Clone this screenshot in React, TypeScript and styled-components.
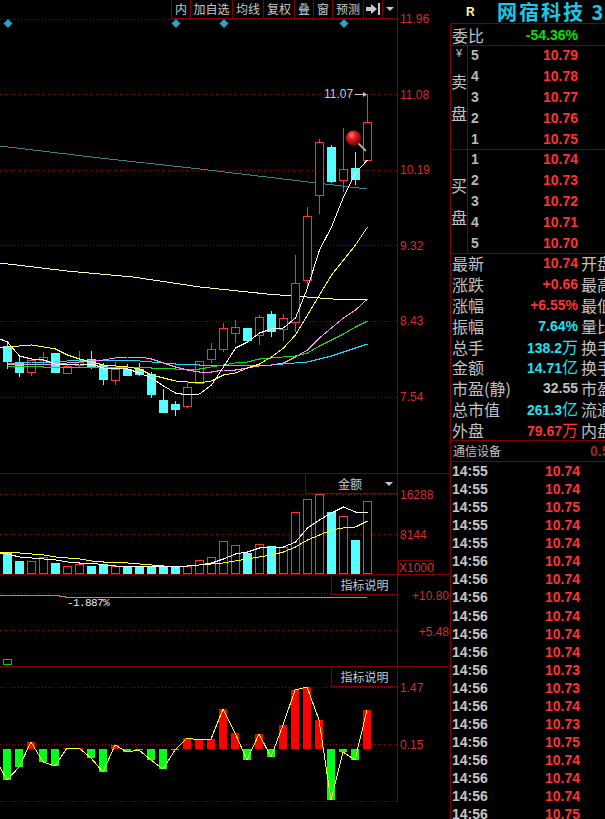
import React, { FC } from "react";
import styled, { createGlobalStyle } from "styled-components";

const RED = "#ff3333";
const CYAN = "#54ffff";
const GRID = "#a00000";
const LINE = "#800000";
const CJK = `"Noto Sans CJK SC", "Liberation Sans", sans-serif`;
const NUM = `"Liberation Sans", "Noto Sans CJK SC", sans-serif`;

const GlobalStyle = createGlobalStyle`
  html, body {
    margin: 0;
    padding: 0;
    background: #000;
    overflow: hidden;
  }
`;

const Screen = styled.div`
  width: 605px;
  height: 819px;
  display: flex;
  background: #000;
  overflow: hidden;
`;

const ChartColumn = styled.div`
  width: 450px;
  flex: none;
  display: flex;
  flex-direction: column;
`;

const Pane = styled.div<{ $height: number; $noBorder?: boolean }>`
  position: relative;
  height: ${(p) => p.$height}px;
  flex: none;
  display: flex;
  box-sizing: border-box;
  border-bottom: ${(p) => (p.$noBorder ? "none" : `1px solid ${LINE}`)};
`;

const Plot = styled.div`
  width: 397px;
  flex: none;
  border-right: 1px solid ${LINE};
  box-sizing: content-box;
  svg {
    display: block;
  }
`;

const Axis = styled.div<{ $top: number; $step: number; $align?: string }>`
  flex: 1;
  display: flex;
  flex-direction: column;
  align-items: ${(p) => p.$align || "flex-start"};
  padding-top: ${(p) => p.$top}px;
  padding-left: 2px;
  padding-right: 1px;
  span {
    height: ${(p) => p.$step}px;
    flex: none;
    font: 12px/16px ${NUM};
    color: #d92b2b;
  }
`;

const Toolbar = styled.div`
  position: absolute;
  top: 0;
  left: 171px;
  height: 18px;
  display: flex;
  background: #000;
  border-bottom: 1px solid ${LINE};
`;

const ToolButton = styled.div<{ $width: number }>`
  width: ${(p) => p.$width}px;
  box-sizing: border-box;
  border-left: 1px solid ${LINE};
  display: flex;
  align-items: center;
  justify-content: center;
  font: 12px/18px ${CJK};
  color: #c8c8c8;
  white-space: nowrap;
`;

const PaneTab = styled.div<{ $left: number; $height: number }>`
  position: absolute;
  top: 0;
  left: ${(p) => p.$left}px;
  width: ${(p) => 397 - p.$left}px;
  height: ${(p) => p.$height}px;
  box-sizing: border-box;
  border-left: 1px solid ${LINE};
  border-bottom: 1px solid ${LINE};
  background: #000;
  display: flex;
  align-items: center;
  justify-content: center;
  font: 12px/18px ${CJK};
  color: #c8c8c8;
`;

const AmountTab = styled(PaneTab)`
  padding-right: 21px;
  padding-left: 18px;
`;

const TabCaret = styled.i`
  position: absolute;
  right: 4px;
  top: 8px;
  width: 0;
  height: 0;
  border-left: 4px solid transparent;
  border-right: 4px solid transparent;
  border-top: 4px solid #c8c8c8;
`;

const UnitBox = styled.div`
  position: absolute;
  left: 398px;
  bottom: 0;
  width: 36px;
  height: 14px;
  box-sizing: border-box;
  border: 1px solid ${LINE};
  border-bottom: none;
  font: 12px/14px ${NUM};
  color: #d92b2b;
  text-align: center;
`;

const DriftLabel = styled.div`
  position: absolute;
  left: 67px;
  top: 21px;
  font: 11px/14px "Liberation Mono", monospace;
  letter-spacing: -0.6px;
  color: #e8e8e8;
`;

const GreenMark = styled.div`
  position: absolute;
  left: 3px;
  bottom: 1px;
  width: 7px;
  height: 4px;
  border: 1px solid #00d000;
`;

const HighLabel = styled.div`
  position: absolute;
  left: 324px;
  top: 87px;
  font: 12px/15px ${NUM};
  color: #b8cfe4;
`;

const Side = styled.div`
  flex: 1;
  min-width: 0;
  border-left: 1px solid ${LINE};
  margin-top: 23px;
  display: flex;
  flex-direction: column;
  position: relative;
`;

const Header = styled.div`
  position: absolute;
  top: -23px;
  left: -1px;
  width: 155px;
  height: 23px;
  display: flex;
  align-items: center;
  overflow: hidden;
  white-space: nowrap;
`;

const Market = styled.span`
  flex: none;
  margin-left: 16px;
  width: 31px;
  font: bold 12px/22px ${NUM};
  color: #ffff8c;
`;

const Title = styled.span`
  flex: none;
  font: bold 20px/22px ${CJK};
  letter-spacing: 2px;
  color: #18c8e8;
`;

const Row = styled.div<{ $height?: number }>`
  height: ${(p) => p.$height || 20.8}px;
  flex: none;
  display: flex;
  align-items: center;
  position: relative;
  white-space: nowrap;
  overflow: hidden;
`;

const RowLabel = styled.span`
  width: 71px;
  padding-left: 1px;
  box-sizing: border-box;
  flex: none;
  font: 16px/20px ${CJK};
  color: #c0c0c0;
`;

const StatValue = styled.span<{ $color: string }>`
  width: 56px;
  flex: none;
  text-align: right;
  font: bold 14px/20px ${NUM};
  color: ${(p) => p.$color};
`;

const StatUnit = styled.span`
  font: 16px/20px ${CJK};
`;

const StatExtra = styled.span`
  margin-left: 3px;
  font: 16px/20px ${CJK};
  color: #c0c0c0;
`;

const RatioRow = styled(Row)`
  border-top: 1px solid ${LINE};
  border-bottom: 1px solid ${LINE};
  height: 23px;
  box-sizing: border-box;
`;

const Book = styled.div`
  height: 104px;
  flex: none;
  display: flex;
  box-sizing: border-box;
  border-bottom: 1px solid ${LINE};
`;

const BookSide = styled.div<{ $pad: number }>`
  width: 16px;
  flex: none;
  border-right: 1px solid ${LINE};
  box-sizing: content-box;
  display: flex;
  flex-direction: column;
  align-items: center;
  padding-top: ${(p) => p.$pad}px;
  gap: 12px;
  font: 16px/20px ${CJK};
  color: #c0c0c0;
`;

const Yen = styled.span`
  font: 11px/12px ${NUM};
`;

const Levels = styled.div`
  flex: 1;
  min-width: 0;
  margin-top: -1px;
`;

const Level = styled.div`
  height: 20.8px;
  display: flex;
  align-items: center;
  padding-left: 3px;
  font: bold 14px/20px ${NUM};
`;

const LevelIndex = styled.span`
  width: 72px;
  color: #b8b8b8;
`;

const LevelPrice = styled.span`
  color: ${RED};
`;

const Stats = styled.div`
  flex: none;
  height: 187px;
  box-sizing: border-box;
  border-bottom: 1px solid ${LINE};
`;

const IndustryRow = styled(Row)`
  border-bottom: 1px solid ${LINE};
  height: 21px;
  box-sizing: border-box;
  flex: none;
`;

const IndustryName = styled.span`
  width: 137px;
  padding-left: 2px;
  flex: none;
  font: 12px/18px ${CJK};
  color: #c0c0c0;
`;

const IndustryValue = styled.span`
  font: bold 14px/18px ${NUM};
  color: #a82020;
`;

const TickRow = styled.div`
  height: 18.07px;
  display: flex;
  align-items: center;
  padding-left: 1px;
  font: bold 14px/18px ${NUM};
`;

const TickTime = styled.span`
  width: 93px;
  color: #c4c4c4;
`;

const TickPrice = styled.span`
  color: ${RED};
`;

/* one entry per trading day: [wickTop, bodyTop, bodyBottom, wickBottom, up?] */
const candles: [number, number, number, number, boolean][] = [
  [342, 346, 361, 369, false],
  [356, 362, 372, 377, false],
  [358, 360, 372, 376, true],
  [352, 357, 360, 364, true],
  [353, 353, 372, 372, false],
  [365, 366, 373, 374, true],
  [351, 362, 365, 368, true],
  [351, 359, 366, 369, false],
  [363, 365, 379, 385, false],
  [362, 369, 380, 385, true],
  [364, 369, 375, 376, false],
  [363, 369, 374, 376, false],
  [372, 374, 394, 398, false],
  [389, 400, 412, 413, false],
  [401, 404, 409, 416, false],
  [383, 387, 406, 408, true],
  [361, 361, 383, 383, true],
  [343, 349, 359, 363, true],
  [323, 328, 349, 352, true],
  [320, 327, 333, 343, true],
  [328, 328, 340, 340, false],
  [315, 317, 335, 345, true],
  [311, 314, 331, 337, false],
  [314, 318, 329, 341, true],
  [255, 283, 322, 332, true],
  [207, 216, 280, 287, true],
  [139, 142, 195, 214, true],
  [145, 147, 181, 183, false],
  [128, 169, 180, 192, true],
  [152, 168, 179, 185, false],
  [94, 122, 160, 160, true],
];

const ma5 = [342, 356, 359, 360, 364, 365, 364, 364, 368, 368, 369, 373, 378, 386, 393, 395, 394, 385, 367, 348, 342, 333, 329, 328, 318, 288, 250, 227, 197, 173, 160];
const ma10 = [347, 346, 345, 347, 349, 355, 359, 362, 365, 366, 367, 369, 375, 378, 381, 382, 383, 381, 375, 373, 368, 364, 357, 348, 335, 315, 295, 275, 260, 245, 227];
const ma20 = [365, 364, 364, 365, 364, 363, 362, 361, 360, 358, 357, 357, 359, 363, 367, 370, 372, 372, 370, 370, 368, 366, 365, 363, 357, 350, 338, 328, 318, 310, 299];
const ma30 = [366, 366, 366, 367, 367, 367, 367, 367, 367, 367, 367, 367, 368, 368, 369, 369, 369, 367, 365, 363, 362, 359, 358, 357, 356, 353, 346, 340, 334, 327, 321];
const ma60 = [363, 363, 362, 362, 362, 361, 360, 360, 360, 360, 360, 361, 362, 363, 364, 364, 365, 365, 365, 365, 365, 365, 365, 364, 363, 362, 359, 356, 352, 348, 344];

const volumes: [number, boolean][] = [
  [553, false], [561, false], [561, true], [557, true], [563, false], [566, true],
  [564, true], [566, false], [564, false], [566, true], [567, false], [566, false],
  [566, false], [567, false], [567, false], [566, true], [560, true], [557, true],
  [541, true], [545, true], [553, false], [544, true], [546, false], [547, true],
  [512, true], [499, true], [494, true], [512, false], [516, true], [540, false],
  [501, true],
];
const volWhite = [554, 557, 558, 559, 560, 562, 563, 563, 565, 566, 566, 566, 566, 566, 566, 566, 565, 563, 559, 554, 552, 548, 547, 547, 542, 528, 520, 513, 507, 512, 512];
const volYellow = [552, 553, 554, 555, 557, 558, 559, 561, 562, 562, 563, 564, 565, 566, 566, 566, 565, 564, 563, 561, 559, 557, 555, 552, 547, 540, 535, 530, 528, 527, 521];

const oscillator = [780, 767, 742, 762, 766, 748, 748, 758, 772, 745, 752, 750, 760, 769, 750, 738, 740, 739, 709, 733, 760, 734, 757, 725, 690, 687, 720, 800, 752, 760, 710];

const AMOUNT_TOP = 474;
const DRIFT_TOP = 575;
const OSC_TOP = 667;

const xAt = (i: number) => 7 + 12 * i;
const toPoints = (ys: number[], top: number) =>
  ys.map((y, i) => `${xAt(i) + 0.5},${y - top}`).join(" ");

const GridLines: FC<{ ys: number[] }> = ({ ys }) => (
  <g stroke={GRID} strokeDasharray="1 2" shapeRendering="crispEdges">
    {ys.map((y) => (
      <line key={y} x1={0} x2={397} y1={y + 0.5} y2={y + 0.5} />
    ))}
  </g>
);

const Curve: FC<{ points: string; color: string }> = ({ points, color }) => (
  <polyline points={points} fill="none" stroke={color} strokeWidth={1} shapeRendering="crispEdges" />
);

const PriceChart: FC = () => (
  <svg width={397} height={473}>
    <GridLines ys={[19, 94, 170, 245, 321, 397]} />
    {[8, 176, 224, 344].map((x) => (
      <polygon key={x} points={`${x},19 ${x + 4.5},23.5 ${x},28 ${x - 4.5},23.5`} fill="#2f9fc8" />
    ))}
    <Curve points="0,146 100,158 200,169 300,181 367,189" color="#3a8488" />
    <Curve points="0,263 67,271 133,277 200,287 267,294 333,299 367,299" color="#ffffb0" />
    {candles.map(([wt, bt, bb, wb, up], i) => {
      const x = xAt(i);
      const color = up ? RED : CYAN;
      return (
        <g key={i} shapeRendering="crispEdges">
          <line x1={x + 0.5} x2={x + 0.5} y1={wt} y2={wb} stroke={color} />
          {up ? (
            <rect x={x - 3.5} y={bt + 0.5} width={8} height={bb - bt} fill="#000" stroke={RED} />
          ) : (
            <rect x={x - 4} y={bt} width={9} height={bb - bt + 1} fill={CYAN} />
          )}
        </g>
      );
    })}
    <Curve points={toPoints(ma60, 0)} color="#20d8ff" />
    <Curve points={toPoints(ma30, 0)} color="#10e010" />
    <Curve points={toPoints(ma20, 0)} color="#ff90f0" />
    <Curve points={`0,348 ${toPoints(ma10, 0)}`} color="#ffff30" />
    <Curve points={`0,339 ${toPoints(ma5, 0)}`} color="#ffffff" />
    {/* highest price marker */}
    <line x1={355} x2={366} y1={94.5} y2={94.5} stroke="#c8c8c8" shapeRendering="crispEdges" />
    <polygon points="363,92 367,94.5 363,97" fill="#c8c8c8" />
    {/* pushpin */}
    <defs>
      <radialGradient id="pinHead" cx="0.38" cy="0.32" r="0.75">
        <stop offset="0" stopColor="#ff7a7a" />
        <stop offset="0.4" stopColor="#d81818" />
        <stop offset="1" stopColor="#700000" />
      </radialGradient>
    </defs>
    <line x1={358} y1={143} x2={366} y2={151} stroke="#a8a8a8" strokeWidth={2} />
    <circle cx={353.5} cy={138} r={7.5} fill="url(#pinHead)" />
  </svg>
);

const AmountChart: FC = () => (
  <svg width={397} height={100}>
    <GridLines ys={[494 - AMOUNT_TOP, 534 - AMOUNT_TOP]} />
    {volumes.map(([top, up], i) =>
      up ? (
        <rect key={i} x={xAt(i) - 3.5} y={top - AMOUNT_TOP + 0.5} width={8} height={573 - top} fill="#000" stroke={RED} shapeRendering="crispEdges" />
      ) : (
        <rect key={i} x={xAt(i) - 4} y={top - AMOUNT_TOP} width={9} height={574 - top} fill={CYAN} shapeRendering="crispEdges" />
      ),
    )}
    <Curve points={`0,${552 - AMOUNT_TOP} ${toPoints(volYellow, AMOUNT_TOP)}`} color="#ffff20" />
    <Curve points={`0,${553 - AMOUNT_TOP} ${toPoints(volWhite, AMOUNT_TOP)}`} color="#ffffff" />
  </svg>
);

const DriftChart: FC = () => (
  <svg width={397} height={91}>
    <GridLines ys={[593 - DRIFT_TOP, 630 - DRIFT_TOP]} />
    <Curve points="0,20.5 59,20.5 59,21.5 65,21.5 65,22.5 367,22.5" color="#e88420" />
  </svg>
);

const OscillatorChart: FC = () => {
  const base = 749 - OSC_TOP;
  return (
    <svg width={397} height={135}>
      <GridLines ys={[687 - OSC_TOP, 744 - OSC_TOP, 801 - OSC_TOP]} />
      {oscillator.map((y, i) => {
        const top = y - OSC_TOP;
        return (
          <rect
            key={i}
            x={xAt(i) - 4}
            y={Math.min(top, base)}
            width={8}
            height={Math.max(Math.abs(top - base), 1)}
            fill={top < base ? "#ff0000" : "#00ff19"}
            shapeRendering="crispEdges"
          />
        );
      })}
      <Curve points={`0,${767 - OSC_TOP} ${oscillator.map((y, i) => `${xAt(i)},${y - OSC_TOP}`).join(" ")}`} color="#ffff20" />
    </svg>
  );
};

const toolItems: [string, number][] = [
  ["内", 19],
  ["加自选", 42],
  ["均线", 31],
  ["复权", 31],
  ["叠", 19],
  ["窗", 19],
  ["预测", 31],
];

const stats: { label: string; value: string; unit?: string; color: string; extra: string }[] = [
  { label: "最新", value: "10.74", color: RED, extra: "开盘" },
  { label: "涨跌", value: "+0.66", color: RED, extra: "最高" },
  { label: "涨幅", value: "+6.55%", color: RED, extra: "最低" },
  { label: "振幅", value: "7.64%", color: "#20e0f0", extra: "量比" },
  { label: "总手", value: "138.2", unit: "万", color: "#20e0f0", extra: "换手" },
  { label: "金额", value: "14.71", unit: "亿", color: "#20e0f0", extra: "换手" },
  { label: "市盈(静)", value: "32.55", color: "#c0c0c0", extra: "市盈" },
  { label: "总市值", value: "261.3", unit: "亿", color: "#20e0f0", extra: "流通" },
  { label: "外盘", value: "79.67", unit: "万", color: RED, extra: "内盘" },
];

const ticks: [string, string][] = [
  ["14:55", "10.74"], ["14:55", "10.74"], ["14:55", "10.75"], ["14:55", "10.74"], ["14:55", "10.74"],
  ["14:56", "10.74"], ["14:56", "10.74"], ["14:56", "10.74"], ["14:56", "10.74"], ["14:56", "10.74"],
  ["14:56", "10.74"], ["14:56", "10.73"], ["14:56", "10.73"], ["14:56", "10.74"], ["14:56", "10.73"],
  ["14:56", "10.75"], ["14:56", "10.74"], ["14:56", "10.74"], ["14:56", "10.74"], ["14:56", "10.75"],
];

const App: FC = () => (
  <>
    <GlobalStyle />
    <Screen>
      <ChartColumn>
        <Pane $height={474}>
          <Plot>
            <PriceChart />
          </Plot>
          <Axis $top={11} $step={75.6}>
            {["11.96", "11.08", "10.19", "9.32", "8.43", "7.54"].map((v) => (
              <span key={v}>{v}</span>
            ))}
          </Axis>
          <HighLabel>11.07</HighLabel>
          <Toolbar>
            {toolItems.map(([name, w]) => (
              <ToolButton key={name} $width={w}>
                {name}
              </ToolButton>
            ))}
            <ToolButton $width={19}>
              <svg width={15} height={12} viewBox="0 0 15 12">
                <path d="M0 4h5V1l6 5-6 5V8H0z" fill="#c8c8c8" />
                <rect x={12} y={0} width={2} height={12} fill="#c8c8c8" />
              </svg>
            </ToolButton>
            <ToolButton $width={15}>
              <svg width={8} height={4} viewBox="0 0 8 4">
                <path d="M0 0h8L4 4z" fill="#c8c8c8" />
              </svg>
            </ToolButton>
          </Toolbar>
        </Pane>
        <Pane $height={101}>
          <Plot>
            <AmountChart />
          </Plot>
          <Axis $top={13} $step={40}>
            <span>16288</span>
            <span>8144</span>
          </Axis>
          <AmountTab $left={305} $height={20}>
            金额
            <TabCaret />
          </AmountTab>
          <UnitBox>X1000</UnitBox>
        </Pane>
        <Pane $height={92}>
          <Plot>
            <DriftChart />
          </Plot>
          <Axis $top={13} $step={36} $align="flex-end">
            <span>+10.80</span>
            <span>+5.48</span>
          </Axis>
          <PaneTab $left={331} $height={20}>
            指标说明
          </PaneTab>
          <DriftLabel>-1.887%</DriftLabel>
          <GreenMark />
        </Pane>
        <Pane $height={135} $noBorder>
          <Plot>
            <OscillatorChart />
          </Plot>
          <Axis $top={13} $step={57}>
            <span>1.47</span>
            <span>0.15</span>
          </Axis>
          <PaneTab $left={331} $height={20}>
            指标说明
          </PaneTab>
        </Pane>
      </ChartColumn>
      <Side>
        <Header>
          <Market>R</Market>
          <Title>网宿科技 3</Title>
        </Header>
        <RatioRow>
          <RowLabel>委比</RowLabel>
          <StatValue $color="#00e000">-54.36%</StatValue>
        </RatioRow>
        <Book>
          <BookSide $pad={1}>
            <Yen>¥</Yen>
            <span>卖</span>
            <span>盘</span>
          </BookSide>
          <Levels>
            {["10.79", "10.78", "10.77", "10.76", "10.75"].map((p, i) => (
              <Level key={p}>
                <LevelIndex>{5 - i}</LevelIndex>
                <LevelPrice>{p}</LevelPrice>
              </Level>
            ))}
          </Levels>
        </Book>
        <Book>
          <BookSide $pad={25}>
            <span>买</span>
            <span>盘</span>
          </BookSide>
          <Levels>
            {["10.74", "10.73", "10.72", "10.71", "10.70"].map((p, i) => (
              <Level key={p}>
                <LevelIndex>{i + 1}</LevelIndex>
                <LevelPrice>{p}</LevelPrice>
              </Level>
            ))}
          </Levels>
        </Book>
        <Stats>
          <Levels>
            {stats.map((s) => (
              <Row key={s.label}>
                <RowLabel>{s.label}</RowLabel>
                <StatValue $color={s.color}>
                  {s.value}
                  {s.unit && <StatUnit>{s.unit}</StatUnit>}
                </StatValue>
                <StatExtra>{s.extra}</StatExtra>
              </Row>
            ))}
          </Levels>
        </Stats>
        <IndustryRow>
          <IndustryName>通信设备</IndustryName>
          <IndustryValue>0.5</IndustryValue>
        </IndustryRow>
        <div>
          {ticks.map(([t, p], i) => (
            <TickRow key={i}>
              <TickTime>{t}</TickTime>
              <TickPrice>{p}</TickPrice>
            </TickRow>
          ))}
        </div>
      </Side>
    </Screen>
  </>
);

export default App;
